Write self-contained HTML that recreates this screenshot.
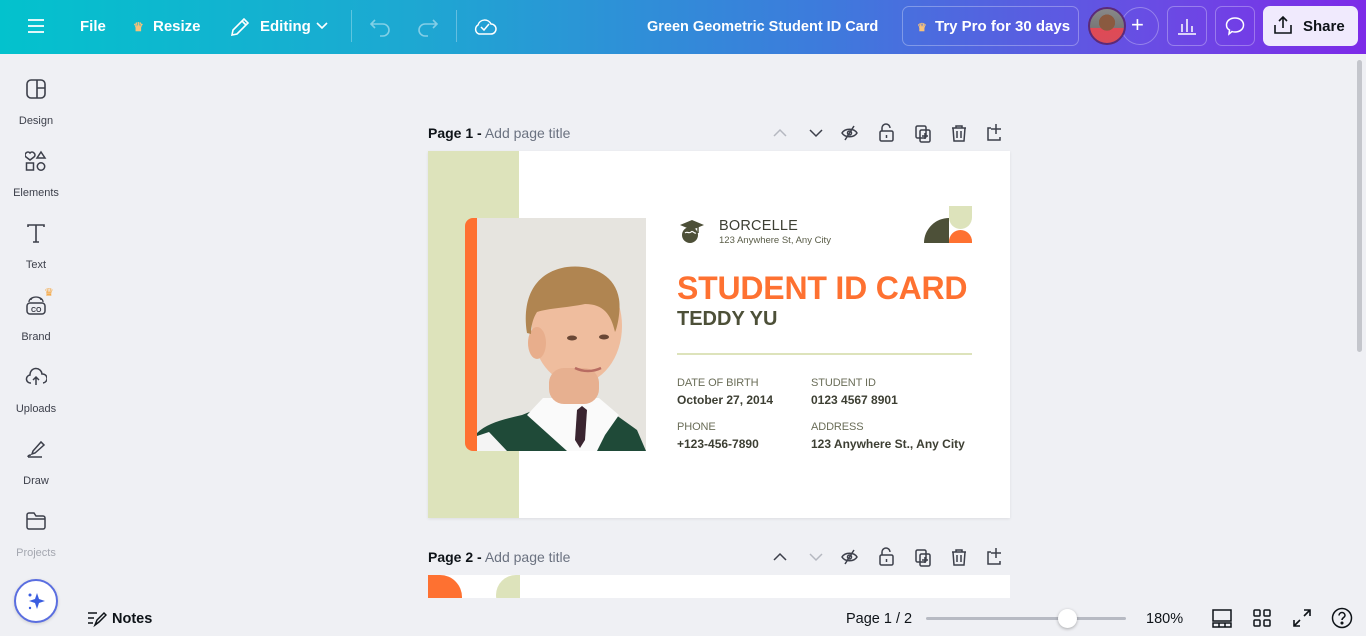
<!DOCTYPE html>
<html><head><meta charset="utf-8"><style>
*{margin:0;padding:0;box-sizing:border-box}
body{width:1366px;height:636px;overflow:hidden;background:#eff0f4;font-family:"Liberation Sans",sans-serif;position:relative;color:#0e1318}
.top{position:absolute;left:0;top:0;width:1366px;height:54px;background:linear-gradient(90deg,#03c2cd 0%,#1da8d2 30%,#3d7bdc 60%,#6a4be4 85%,#7d2ae8 100%);color:#fff}
.top .t{position:absolute;top:18px;font-size:15px;font-weight:bold}
.ab{position:absolute}
.side{position:absolute;left:0;top:54px;width:72px;height:582px}
.si{position:absolute;left:0;width:72px;text-align:center;font-size:11px;color:#3c3f4a}
.si svg{display:block;margin:0 auto 15px}
.ph{position:absolute;font-size:14px;color:#0e1318}
.ph span{color:#6b7280}
.card{position:absolute;left:428px;top:151px;width:582px;height:367px;background:#fff;box-shadow:0 1px 3px rgba(0,0,0,.08)}
.lab{position:absolute;font-size:11px;color:#6a6d58;letter-spacing:-.1px}
.val{position:absolute;font-size:12px;font-weight:bold;color:#3d3f33}
.bot{position:absolute;left:72px;top:598px;width:1294px;height:38px;background:#eff0f4}
</style></head><body>
<div class="top">
 <svg class="ab" style="left:27px;top:18px" width="18" height="16"><path d="M1 2h16M1 8h16M1 14h16" stroke="#fff" stroke-width="1.8"/></svg>
 <div class="t" style="left:80px">File</div>
 <div class="t" style="left:133px;font-size:12px;color:#f8c27a;top:20px">♛</div>
 <div class="t" style="left:153px">Resize</div>
 <svg class="ab" style="left:229px;top:16px" width="22" height="22"><path d="M3 19l1-5L15 3l4 4L8 18zM13 5l4 4" fill="none" stroke="#fff" stroke-width="1.6"/></svg>
 <div class="t" style="left:260px">Editing</div>
 <svg class="ab" style="left:316px;top:22px" width="12" height="8"><path d="M1 1l5 5 5-5" fill="none" stroke="#fff" stroke-width="1.6"/></svg>
 <div class="ab" style="left:351px;top:10px;width:1px;height:32px;background:rgba(255,255,255,.3)"></div>
 <svg class="ab" style="left:370px;top:17px" width="22" height="20"><path d="M5 3L1 7l4 4M1 7h12a6 6 0 010 12h-3" fill="none" stroke="rgba(255,255,255,.45)" stroke-width="1.6"/></svg>
 <svg class="ab" style="left:416px;top:17px" width="22" height="20"><path d="M17 3l4 4-4 4M21 7H9a6 6 0 000 12h3" fill="none" stroke="rgba(255,255,255,.45)" stroke-width="1.6"/></svg>
 <div class="ab" style="left:456px;top:10px;width:1px;height:32px;background:rgba(255,255,255,.3)"></div>
 <svg class="ab" style="left:473px;top:15px" width="24" height="22"><path d="M6 19a5 5 0 01-1-9 7 7 0 0113-1 5 5 0 010 10z" fill="none" stroke="#fff" stroke-width="1.5"/><path d="M8 12l3 3 5-6" fill="none" stroke="#fff" stroke-width="1.5"/></svg>
 <div class="t" style="left:647px;font-size:14.5px;top:19px">Green Geometric Student ID Card</div>
 <div class="ab" style="left:902px;top:6px;width:177px;height:40px;border:1px solid rgba(255,255,255,.3);border-radius:7px"></div>
 <div class="t" style="left:917px;font-size:11px;color:#f8c27a;top:21px">♛</div>
 <div class="t" style="left:935px">Try Pro for 30 days</div>
 <div class="ab" style="left:1121px;top:7px;width:38px;height:38px;border:1px solid rgba(255,255,255,.3);border-radius:50%"></div>
 <div class="ab" style="left:1088px;top:7px;width:38px;height:38px;border-radius:50%;background:radial-gradient(circle at 50% 40%,#8a5a40 0 30%,transparent 31%),linear-gradient(180deg,#888 0,#777 55%,#e04a55 56%,#d94c5a 100%);border:2px solid #5b2a78"></div>
 <div class="t" style="left:1131px;font-size:22px;font-weight:normal;top:12px">+</div>
 <div class="ab" style="left:1167px;top:6px;width:40px;height:40px;border:1px solid rgba(255,255,255,.3);border-radius:7px"></div>
 <svg class="ab" style="left:1177px;top:16px" width="20" height="20"><path d="M1 18h18M5 16V8M10 16V3M15 16V10" stroke="#fff" stroke-width="1.5"/></svg>
 <div class="ab" style="left:1215px;top:6px;width:40px;height:40px;border:1px solid rgba(255,255,255,.3);border-radius:7px"></div>
 <svg class="ab" style="left:1225px;top:16px" width="20" height="20"><path d="M10 2c5 0 8.5 3 8.5 7s-3.5 7-8.5 7c-1 0-2 0-3-.5L4 18l.5-4C2.5 13 1.5 11 1.5 9c0-4 3.5-7 8.5-7z" fill="none" stroke="#fff" stroke-width="1.5"/></svg>
 <div class="ab" style="left:1263px;top:6px;width:95px;height:40px;background:#f0eafd;border-radius:7px"></div>
 <svg class="ab" style="left:1273px;top:15px" width="20" height="20"><path d="M10 13V2M6 6l4-4 4 4M2 10v8h16v-8" fill="none" stroke="#0e1318" stroke-width="1.6"/></svg>
 <div class="t" style="left:1303px;color:#0e1318">Share</div>
</div>
<div class="ab" style="left:1357px;top:60px;width:5px;height:292px;background:#c4c6cc;border-radius:3px"></div>
<div class="side">
 <div class="si" style="top:24px"><svg width="22" height="22"><rect x="2" y="2" width="18" height="18" rx="4" fill="none" stroke="#3c3f4a" stroke-width="1.6"/><path d="M12 2v18M12 10h8" stroke="#3c3f4a" stroke-width="1.6"/></svg>Design</div>
 <div class="si" style="top:96px"><svg width="22" height="22"><path d="M5 3a2.5 2.5 0 014 0 2.5 2.5 0 010 4L5 10 1 7a2.5 2.5 0 010-4 2.5 2.5 0 014 0z M16 2l4 6h-8z" fill="none" stroke="#3c3f4a" stroke-width="1.5"/><rect x="1.5" y="13" width="7" height="7" fill="none" stroke="#3c3f4a" stroke-width="1.5"/><circle cx="16" cy="16.5" r="3.7" fill="none" stroke="#3c3f4a" stroke-width="1.5"/></svg>Elements</div>
 <div class="si" style="top:168px"><svg width="22" height="22"><path d="M3 5V3h16v2M11 3v17M8 20h6" fill="none" stroke="#3c3f4a" stroke-width="1.6"/></svg>Text</div>
 <div class="ab" style="left:44px;top:232px;color:#f5a33a;font-size:11px">♛</div>
 <div class="si" style="top:240px"><svg width="22" height="22"><rect x="2" y="9" width="18" height="11" rx="3" fill="none" stroke="#3c3f4a" stroke-width="1.5"/><path d="M4 8a7 5 0 0114 0M6 6a5 3 0 0110 0" fill="none" stroke="#3c3f4a" stroke-width="1.3"/><text x="6" y="18" font-size="7" font-weight="bold" fill="#3c3f4a" font-family="Liberation Sans">CO</text></svg>Brand</div>
 <div class="si" style="top:312px"><svg width="22" height="22"><path d="M6 17a4 4 0 01-1-8 6 6 0 0112-1 4.5 4.5 0 011 9M11 19v-8M8 14l3-3 3 3" fill="none" stroke="#3c3f4a" stroke-width="1.5"/></svg>Uploads</div>
 <div class="si" style="top:384px"><svg width="22" height="22"><path d="M8 13l8-9 3 3-9 8-3 1zM3 19h14M3 19c0-2 2-2 3-2" fill="none" stroke="#3c3f4a" stroke-width="1.5"/></svg>Draw</div>
 <div class="si" style="top:456px;color:#a4a7b0"><svg width="22" height="22"><path d="M2 5a2 2 0 012-2h5l2 3h7a2 2 0 012 2v9a2 2 0 01-2 2H4a2 2 0 01-2-2zM2 9h18" fill="none" stroke="#3c3f4a" stroke-width="1.5"/></svg>Projects</div>
 <div class="ab" style="left:14px;top:525px;width:44px;height:44px;border-radius:50%;background:#fff;border:2px solid #5a6ee0;box-shadow:0 1px 3px rgba(0,0,0,.15)"></div>
 <svg class="ab" style="left:25px;top:536px" width="22" height="22"><path d="M12 3l2 6 6 2-6 2-2 6-2-6-6-2 6-2z" fill="#3a5de0"/><circle cx="5" cy="5" r="1.5" fill="#3a5de0"/><circle cx="5" cy="18" r="1.2" fill="#3a5de0"/></svg>
</div>

<div class="ph" style="left:428px;top:125px"><b>Page 1 -</b> <span>Add page title</span></div>
<svg class="ab" style="left:770px;top:122px" width="240" height="22" fill="none" stroke="#3c3f4a" stroke-width="1.5">
 <path d="M4 14l6-6 6 6" stroke="#b5b8c0"/>
 <path d="M40 8l6 6 6-6"/>
 <path d="M72 11c3-5 12-5 15 0-3 5-12 5-15 0zM84 4l-9 14"/><circle cx="79.5" cy="11" r="2"/>
 <rect x="110" y="9" width="13" height="10" rx="1.5"/><path d="M112 9V6a4 4 0 018 0M116.5 13v3"/>
 <rect x="146" y="4" width="10" height="12" rx="1.5"/><rect x="150" y="8" width="10" height="12" rx="1.5"/><path d="M155 11v6M152 14h6"/>
 <path d="M182 6h14M186 6V4h6v2M183 6l1 13h10l1-13M187 9v7M191 9v7"/>
 <path d="M221 6h-3v12h12v-3M226 2v10M221 7h10"/>
</svg>

<div class="card">
 <div class="ab" style="left:0;top:0;width:91px;height:367px;background:#dde3bb"></div>
 <div class="ab" style="left:37px;top:67px;width:20px;height:233px;background:#fe7131;border-radius:8px 0 0 8px"></div>
 <svg class="ab" style="left:49px;top:67px" width="169" height="233">
  <rect width="169" height="233" fill="#e6e4df"/>
  <path d="M0 215c10-10 28-14 45-18l30-12 50 2 35 25 9 21H0z" fill="#1f4a38"/>
  <path d="M66 180l-16 17 40 36h30l8-16 14-20-20-17z" fill="#fafafa"/>
  <path d="M0 218l12-4 18 19H0z" fill="#f4f4f4"/>
  <path d="M100 192l5-4 5 4-2 30-5 8-5-8z" fill="#3a2530"/>
  <ellipse cx="100" cy="108" rx="45" ry="58" fill="#efbd9e"/>
  <rect x="72" y="150" width="50" height="36" rx="15" fill="#e7b090"/>
  <ellipse cx="60" cy="125" rx="9" ry="16" fill="#e8ae8c"/>
  <path d="M50 115c-6-40 12-62 40-66 22-3 48 6 52 32 2 12-2 30-4 33-4-18-12-28-30-28-20 4-35 4-48 8-4 6-6 14-6 22z" fill="#b08551"/>
  <ellipse cx="95" cy="120" rx="5" ry="2.5" fill="#6a4735"/>
  <ellipse cx="127" cy="119" rx="5" ry="2.5" fill="#6a4735"/>
  <path d="M98 150c8 4 18 4 26 0" stroke="#b86c62" stroke-width="2.5" fill="none"/>
 </svg>
 <svg class="ab" style="left:249px;top:68px" width="30" height="24" fill="#4d5038"><path d="M3 6l12-5 12 5-12 5z"/><path d="M21 8v6" stroke="#4d5038" stroke-width="1.5"/><circle cx="13" cy="16" r="8"/><path d="M8 14c2-2 4 1 6-1s3 2 5 1" stroke="#fff" stroke-width="1.2" fill="none"/></svg>
 <div class="ab" style="left:291px;top:67px;font-size:14.5px;color:#3d3f33;letter-spacing:.2px">BORCELLE</div>
 <div class="ab" style="left:291px;top:84px;font-size:9.5px;color:#5a5d48">123 Anywhere St, Any City</div>
 <div class="ab" style="left:496px;top:67px;width:25px;height:25px;background:#4d5038;border-radius:25px 0 0 0"></div>
 <div class="ab" style="left:521px;top:55px;width:23px;height:23px;background:#dde3bb;border-radius:0 0 12px 12px"></div>
 <div class="ab" style="left:521px;top:79px;width:23px;height:13px;background:#fe7131;border-radius:12px 12px 0 0"></div>
 <div class="ab" style="left:249px;top:119px;font-size:32px;font-weight:bold;color:#fe7131;letter-spacing:-.2px;white-space:nowrap">STUDENT ID CARD</div>
 <div class="ab" style="left:249px;top:157px;font-size:20px;font-weight:bold;color:#4d5038">TEDDY YU</div>
 <div class="ab" style="left:249px;top:202px;width:295px;height:2px;background:#dde3bb"></div>
 <div class="lab" style="left:249px;top:226px">DATE OF BIRTH</div>
 <div class="val" style="left:249px;top:242px">October 27, 2014</div>
 <div class="lab" style="left:383px;top:226px">STUDENT ID</div>
 <div class="val" style="left:383px;top:242px">0123 4567 8901</div>
 <div class="lab" style="left:249px;top:270px">PHONE</div>
 <div class="val" style="left:249px;top:286px">+123-456-7890</div>
 <div class="lab" style="left:383px;top:270px">ADDRESS</div>
 <div class="val" style="left:383px;top:286px">123 Anywhere St., Any City</div>
</div>

<div class="ph" style="left:428px;top:549px"><b>Page 2 -</b> <span>Add page title</span></div>
<svg class="ab" style="left:770px;top:546px" width="240" height="22" fill="none" stroke="#3c3f4a" stroke-width="1.5">
 <path d="M4 14l6-6 6 6"/>
 <path d="M40 8l6 6 6-6" stroke="#b5b8c0"/>
 <path d="M72 11c3-5 12-5 15 0-3 5-12 5-15 0zM84 4l-9 14"/><circle cx="79.5" cy="11" r="2"/>
 <rect x="110" y="9" width="13" height="10" rx="1.5"/><path d="M112 9V6a4 4 0 018 0M116.5 13v3"/>
 <rect x="146" y="4" width="10" height="12" rx="1.5"/><rect x="150" y="8" width="10" height="12" rx="1.5"/><path d="M155 11v6M152 14h6"/>
 <path d="M182 6h14M186 6V4h6v2M183 6l1 13h10l1-13M187 9v7M191 9v7"/>
 <path d="M221 6h-3v12h12v-3M226 2v10M221 7h10"/>
</svg>
<div class="ab" style="left:428px;top:575px;width:582px;height:23px;background:#fff;overflow:hidden">
 <div class="ab" style="left:0;top:0;width:12px;height:23px;background:#fe7131"></div>
 <div class="ab" style="left:12px;top:0;width:22px;height:44px;background:#fe7131;border-radius:0 22px 22px 0"></div>
 <div class="ab" style="left:68px;top:0;width:24px;height:40px;background:#dde3bb;border-radius:24px 0 0 24px"></div>
</div>

<div class="bot">
 <svg class="ab" style="left:15px;top:12px" width="20" height="18" fill="none" stroke="#0e1318" stroke-width="1.5"><path d="M1 3h9M1 8h6M1 13h5M8 15l2-5 7-7 2 2-7 7z"/></svg>
 <div class="ab" style="left:40px;top:13px;font-size:14.5px;font-weight:bold">Notes</div>
 <div class="ab" style="left:774px;top:13px;font-size:14.5px">Page 1 / 2</div>
 <div class="ab" style="left:854px;top:19px;width:200px;height:3px;background:#b7bac3;border-radius:2px"></div>
 <div class="ab" style="left:986px;top:11px;width:19px;height:19px;border-radius:50%;background:#fff;box-shadow:0 1px 3px rgba(0,0,0,.3)"></div>
 <div class="ab" style="left:1074px;top:13px;font-size:14.5px">180%</div>
 <svg class="ab" style="left:1140px;top:10px" width="20" height="20" fill="none" stroke="#0e1318" stroke-width="1.5"><rect x="1" y="2" width="18" height="11"/><path d="M1 15h18v4H1zM7 15v4M13 15v4"/></svg>
 <svg class="ab" style="left:1181px;top:11px" width="18" height="18" fill="none" stroke="#0e1318" stroke-width="1.5"><rect x="1" y="1" width="6" height="6" rx="1"/><rect x="11" y="1" width="6" height="6" rx="1"/><rect x="1" y="11" width="6" height="6" rx="1"/><rect x="11" y="11" width="6" height="6" rx="1"/></svg>
 <svg class="ab" style="left:1221px;top:11px" width="18" height="18" fill="none" stroke="#0e1318" stroke-width="1.6"><path d="M11 1h6v6M17 1l-6 6M7 17H1v-6M1 17l6-6"/></svg>
 <svg class="ab" style="left:1259px;top:9px" width="22" height="22" fill="none" stroke="#0e1318" stroke-width="1.5"><circle cx="11" cy="11" r="9.5"/><path d="M8 8.5a3 3 0 116 0c0 2-3 2-3 4.5"/><circle cx="11" cy="16" r=".8" fill="#0e1318"/></svg>
</div>
</body></html>
